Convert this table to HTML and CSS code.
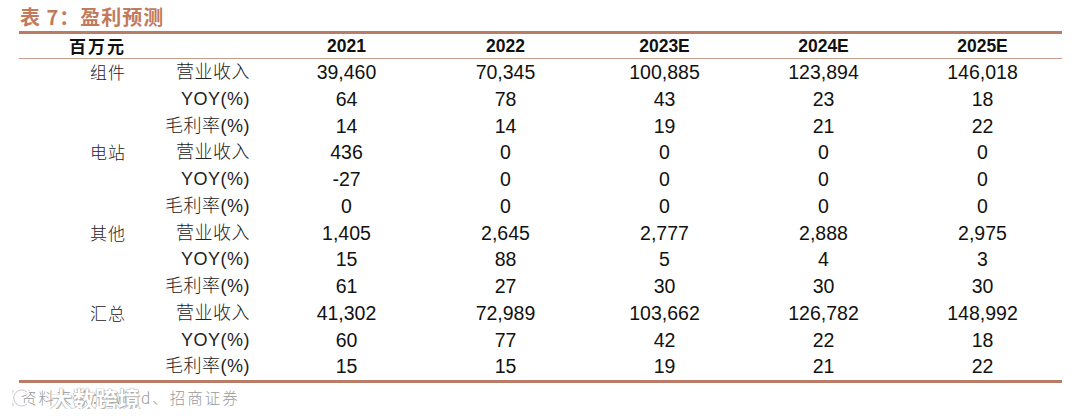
FILE: index.html
```html
<!DOCTYPE html>
<html lang="zh-CN">
<head>
<meta charset="utf-8">
<title>表7：盈利预测</title>
<link rel="stylesheet" href="styles.css">
</head>
<body>
<div class="page">
  <div class="title">表 7：盈利预测</div>
  <div class="table">
    <div class="row head">
      <div class="cat">百万元</div><div class="lab"></div>
      <div class="num">2021</div><div class="num">2022</div><div class="num">2023E</div><div class="num">2024E</div><div class="num">2025E</div>
    </div>
    <div class="body">
      <div class="row"><div class="cat">组件</div><div class="lab">营业收入</div><div class="num">39,460</div><div class="num">70,345</div><div class="num">100,885</div><div class="num">123,894</div><div class="num">146,018</div></div>
      <div class="row"><div class="cat"></div><div class="lab">YOY(%)</div><div class="num">64</div><div class="num">78</div><div class="num">43</div><div class="num">23</div><div class="num">18</div></div>
      <div class="row"><div class="cat"></div><div class="lab">毛利率(%)</div><div class="num">14</div><div class="num">14</div><div class="num">19</div><div class="num">21</div><div class="num">22</div></div>
      <div class="row"><div class="cat">电站</div><div class="lab">营业收入</div><div class="num">436</div><div class="num">0</div><div class="num">0</div><div class="num">0</div><div class="num">0</div></div>
      <div class="row"><div class="cat"></div><div class="lab">YOY(%)</div><div class="num">-27</div><div class="num">0</div><div class="num">0</div><div class="num">0</div><div class="num">0</div></div>
      <div class="row"><div class="cat"></div><div class="lab">毛利率(%)</div><div class="num">0</div><div class="num">0</div><div class="num">0</div><div class="num">0</div><div class="num">0</div></div>
      <div class="row"><div class="cat">其他</div><div class="lab">营业收入</div><div class="num">1,405</div><div class="num">2,645</div><div class="num">2,777</div><div class="num">2,888</div><div class="num">2,975</div></div>
      <div class="row"><div class="cat"></div><div class="lab">YOY(%)</div><div class="num">15</div><div class="num">88</div><div class="num">5</div><div class="num">4</div><div class="num">3</div></div>
      <div class="row"><div class="cat"></div><div class="lab">毛利率(%)</div><div class="num">61</div><div class="num">27</div><div class="num">30</div><div class="num">30</div><div class="num">30</div></div>
      <div class="row"><div class="cat">汇总</div><div class="lab">营业收入</div><div class="num">41,302</div><div class="num">72,989</div><div class="num">103,662</div><div class="num">126,782</div><div class="num">148,992</div></div>
      <div class="row"><div class="cat"></div><div class="lab">YOY(%)</div><div class="num">60</div><div class="num">77</div><div class="num">42</div><div class="num">22</div><div class="num">18</div></div>
      <div class="row"><div class="cat"></div><div class="lab">毛利率(%)</div><div class="num">15</div><div class="num">15</div><div class="num">19</div><div class="num">21</div><div class="num">22</div></div>
    </div>
  </div>
  <div class="source">
    资料来源：Wind、招商证券
    <div class="watermark">
      <svg class="wm-logo" viewBox="0 0 24 24" width="24" height="24">
        <path d="M5 4 L5 20" stroke="#ffffff" stroke-width="4" fill="none" stroke-linecap="round"/>
        <path d="M5 4 L5 20" stroke="#c8c8c8" stroke-width="1" fill="none"/>
        <path d="M19 6 A8 8 0 1 0 19 18" stroke="#ffffff" stroke-width="4" fill="none" stroke-linecap="round"/>
        <path d="M19 6 A8 8 0 1 0 19 18" stroke="#c8c8c8" stroke-width="1" fill="none"/>
      </svg>
      <span class="wm-text">大数跨境</span>
    </div>
  </div>
</div>
</body>
</html>
```

FILE: styles.css
```css
html, body {
  margin: 0;
  padding: 0;
  background: #ffffff;
}

.page {
  width: 1043px;
  margin-left: 19px;
  font-family: "Liberation Sans", "Noto Sans CJK SC", sans-serif;
  color: #111111;
}

.title {
  height: 31px;
  box-sizing: border-box;
  padding: 5px 0 0 1px;
  font-family: "Noto Sans CJK SC", sans-serif;
  font-weight: 700;
  font-size: 20px;
  line-height: 24px;
  color: #c17a5b;
  letter-spacing: 1px;
}

.table {
  border-top: 3px solid #b97c66;
  border-bottom: 3px solid #b97c66;
}

.row {
  display: grid;
  grid-template-columns: 111px 137px repeat(5, 1fr);
  height: 26.75px;
  line-height: 26.75px;
}

.row > div {
  height: 100%;
  white-space: nowrap;
}

.row.head {
  height: 24px;
  line-height: 24px;
  border-bottom: 1px solid #c99b89;
  font-weight: 700;
  font-size: 17.5px;
}

.cat {
  text-align: right;
  padding-right: 4px;
  font-family: "Noto Sans CJK SC", sans-serif;
  font-weight: 300;
  font-size: 17px;
  letter-spacing: 1px;
  color: #222222;
}

.head .cat {
  font-weight: 700;
  font-size: 17px;
  letter-spacing: 2px;
  color: #111111;
}

.lab {
  text-align: right;
  padding-right: 17px;
  font-size: 18px;
  font-weight: 300;
  color: #222222;
  letter-spacing: 0.5px;
}

.num {
  text-align: center;
  font-size: 19.5px;
}

.head .num {
  font-size: 17.5px;
}

.source {
  position: relative;
  padding: 2px 0 0 2px;
  font-family: "Noto Sans CJK SC", "Liberation Sans", sans-serif;
  font-weight: 300;
  font-size: 15.5px;
  line-height: 24px;
  color: #9a9a9a;
  letter-spacing: 2px;
}

.watermark {
  position: absolute;
  left: -11px;
  top: 1px;
  display: flex;
  align-items: center;
  gap: 18px;
}

.wm-logo {
  display: block;
}

.wm-text {
  font-family: "Noto Sans CJK SC", sans-serif;
  font-weight: 700;
  font-size: 22.5px;
  line-height: 28px;
  color: #ffffff;
  letter-spacing: 0;
  text-shadow: 0 0 1px #9a9a9a, 0 0 1px #9a9a9a, 1px 1px 1px #b0b0b0;
}
```
